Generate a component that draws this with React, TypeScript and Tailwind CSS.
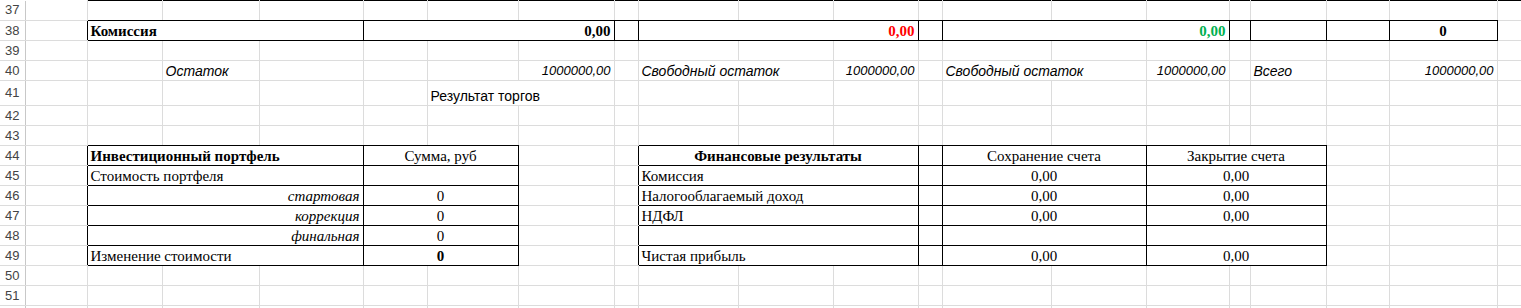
import React from 'react';

type Cell = { span?: number; text?: string; cls?: string; box?: boolean };
type Row = { n: number; label?: boolean; tall?: boolean; top?: boolean; cells: Cell[] };

// column widths, first one is the row-number gutter
const widths = [25, 62, 75, 97, 104, 64, 91, 96, 24, 100, 95, 85, 24, 109, 95, 83, 21, 76, 63, 108, 24];
const DATA_COLS = widths.length - 1;

const serif = "font-['Liberation_Serif','Times_New_Roman',serif] text-[15px]";
const sans = "font-['Liberation_Sans',Arial,sans-serif] text-[14px]";
const sansNum = "font-['Liberation_Sans',Arial,sans-serif] text-[13px] italic text-right";

const e = (n: number): Cell[] => Array.from({ length: n }, () => ({}));

const rows: Row[] = [
  { n: 37, top: true, cells: e(20) },
  {
    n: 38,
    cells: [
      {},
      { span: 3, box: true, text: 'Комиссия', cls: `${serif} font-bold` },
      { span: 3, box: true, text: '0,00', cls: `${serif} font-bold text-right` },
      { box: true },
      { span: 3, box: true, text: '0,00', cls: `${serif} font-bold text-right text-[#ff0000]` },
      { box: true },
      { span: 3, box: true, text: '0,00', cls: `${serif} font-bold text-right text-[#00b050]` },
      { box: true },
      { box: true },
      { box: true },
      { box: true, text: '0', cls: `${serif} font-bold text-center` },
      {},
    ],
  },
  { n: 39, cells: e(20) },
  {
    n: 40,
    cells: [
      {}, {},
      { text: 'Остаток', cls: `${sans} italic` },
      {}, {}, {},
      { text: '1000000,00', cls: sansNum },
      {},
      { span: 2, text: 'Свободный остаток', cls: `${sans} italic` },
      { text: '1000000,00', cls: sansNum },
      {},
      { span: 2, text: 'Свободный остаток', cls: `${sans} italic` },
      { text: '1000000,00', cls: sansNum },
      {},
      { text: 'Всего', cls: `${sans} italic` },
      {},
      { text: '1000000,00', cls: sansNum },
      {},
    ],
  },
  {
    n: 41,
    tall: true,
    cells: [{}, {}, {}, {}, {}, { span: 2, text: 'Результат торгов', cls: sans }, ...e(13)],
  },
  { n: 42, cells: e(20) },
  { n: 43, cells: e(20) },
];

// both report tables share the same shape: label | amount on the left, label | gap | two columns on the right
const tableRow = (n: number, left: Cell, sum: Cell, right: Cell, keep: Cell, close: Cell): Row => ({
  n,
  cells: [
    {},
    { span: 3, box: true, ...left },
    { span: 2, box: true, ...sum },
    {}, {},
    { span: 3, box: true, ...right },
    { box: true },
    { span: 2, box: true, ...keep },
    { span: 3, box: true, ...close },
    {}, {}, {},
  ],
});

const num = `${serif} text-center`;

rows.push(
  tableRow(
    44,
    { text: 'Инвестиционный портфель', cls: `${serif} font-bold` },
    { text: 'Сумма, руб', cls: num },
    { text: 'Финансовые результаты', cls: `${serif} font-bold text-center` },
    { text: 'Сохранение счета', cls: num },
    { text: 'Закрытие счета', cls: num },
  ),
  tableRow(
    45,
    { text: 'Стоимость портфеля', cls: serif },
    {},
    { text: 'Комиссия', cls: serif },
    { text: '0,00', cls: num },
    { text: '0,00', cls: num },
  ),
  tableRow(
    46,
    { text: 'стартовая', cls: `${serif} italic text-right` },
    { text: '0', cls: num },
    { text: 'Налогооблагаемый доход', cls: serif },
    { text: '0,00', cls: num },
    { text: '0,00', cls: num },
  ),
  tableRow(
    47,
    { text: 'коррекция', cls: `${serif} italic text-right` },
    { text: '0', cls: num },
    { text: 'НДФЛ', cls: serif },
    { text: '0,00', cls: num },
    { text: '0,00', cls: num },
  ),
  tableRow(48, { text: 'финальная', cls: `${serif} italic text-right` }, { text: '0', cls: num }, {}, {}, {}),
  tableRow(
    49,
    { text: 'Изменение стоимости', cls: serif },
    { text: '0', cls: `${num} font-bold` },
    { text: 'Чистая прибыль', cls: serif },
    { text: '0,00', cls: num },
    { text: '0,00', cls: num },
  ),
  { n: 50, cells: e(20) },
  { n: 51, cells: e(20) },
  // next row only peeks in under the window edge
  { n: 52, label: false, cells: e(20) },
);

// which data columns of each row sit inside a bordered box
const boxed: boolean[][] = rows.map((r) => {
  const out: boolean[] = [];
  r.cells.forEach((c) => {
    for (let i = 0; i < (c.span ?? 1); i++) out.push(!!c.box);
  });
  while (out.length < DATA_COLS) out.push(false);
  return out;
});

const App: React.FC = () => {
  return (
    <div className="w-[1521px] h-[308px] overflow-hidden bg-white">
      <table className="table-fixed border-collapse w-[1521px] text-black">
        <colgroup>
          {widths.map((w, i) => (
            <col key={i} style={{ width: w }} />
          ))}
        </colgroup>
        <tbody>
          {rows.map((row, ri) => {
            let col = 0;
            return (
              <tr key={row.n} className={row.tall ? 'h-[25px]' : 'h-[20px]'}>
                <td className="border-r border-b border-r-[#c8c8c8] border-b-[#dcdcdc] text-center align-middle p-0 font-['Liberation_Sans',Arial,sans-serif] text-[13px] leading-[18px] text-[#444]">
                  {row.label === false ? '' : row.n}
                </td>
                {row.cells.map((c, ci) => {
                  const start = col;
                  const span = c.span ?? 1;
                  col += span;
                  const end = col;
                  const rightDark = !!c.box || !!boxed[ri][end];
                  const below = boxed[ri + 1];
                  let bottomDark = !!c.box;
                  if (below) for (let k = start; k < end; k++) if (below[k]) bottomDark = true;
                  const topDark = row.top && start >= 1;
                  return (
                    <td
                      key={ci}
                      colSpan={span}
                      className={[
                        'border-r border-b px-[3px] py-0 align-bottom whitespace-nowrap overflow-hidden leading-[18px]',
                        rightDark ? 'border-r-black' : 'border-r-[#dcdcdc]',
                        bottomDark ? 'border-b-black' : 'border-b-[#dcdcdc]',
                        topDark ? 'border-t border-t-black' : '',
                        c.cls ?? '',
                      ].join(' ')}
                    >
                      {c.text}
                    </td>
                  );
                })}
              </tr>
            );
          })}
        </tbody>
      </table>
    </div>
  );
};

export default App;
